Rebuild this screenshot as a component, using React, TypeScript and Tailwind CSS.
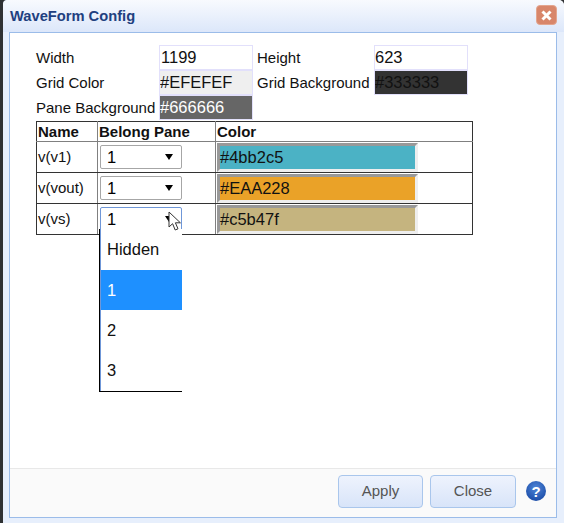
const FONT = "font-['Liberation_Sans',Arial,sans-serif]";

const ROWS = [
  { name: 'v(v1)', color: '#4bb2c5', swatch: 'bg-[#4bb2c5]' },
  { name: 'v(vout)', color: '#EAA228', swatch: 'bg-[#eaa228]' },
  { name: 'v(vs)', color: '#c5b47f', swatch: 'bg-[#c5b47f]' },
];

function Field({ value, className = '' }: { value: string; className?: string }) {
  return (
    <div className={`h-[25px] border border-[#e2e0fb] text-[16.5px] leading-[23px] whitespace-nowrap overflow-hidden ${className}`}>
      {value}
    </div>
  );
}

function Select({ focused }: { focused?: boolean }) {
  return (
    <div
      className={`ml-[2px] w-[82px] h-[24px] rounded-[2px] border bg-white flex items-center justify-between pl-[6px] pr-[8px] text-[16.5px] text-black ${
        focused ? 'border-[#6f97d8]' : 'border-[#a6a6a6]'
      }`}
    >
      <span>1</span>
      <span className="w-0 h-0 border-x-[4px] border-x-transparent border-t-[6px] border-t-black" />
    </div>
  );
}

export default function App() {
  return (
    <div className={`${FONT} w-[564px] h-[523px] overflow-hidden bg-[#2f3133] pl-[3px] text-[15px] text-[#111]`}>
      <div className="w-[561px] h-[523px] rounded-tr-[6px] rounded-tl-[4px] bg-[#e7effc] flex flex-col">
        {/* Title bar */}
        <div className="h-[32px] shrink-0 rounded-t-[5px] bg-gradient-to-b from-[#f8fafe] to-[#dce7fa] flex items-center justify-between pl-[7px] pr-[7px]">
          <span className="text-[14.7px] font-bold text-[#21407f]">WaveForm Config</span>
          <span className="w-[21px] h-[20px] mb-[2px] rounded-[4px] bg-[#d8866a] border border-[#e3a58e] flex items-center justify-center">
            <svg width="13" height="13" viewBox="0 0 13 13">
              <path d="M2.5 2.5l8 8M10.5 2.5l-8 8" stroke="#fff" strokeWidth="3" />
            </svg>
          </span>
        </div>

        {/* Body */}
        <div className="ml-[6px] mr-[7px] h-[486px] shrink-0 border border-[#9bbce9] bg-white flex flex-col">
          <div className="flex-1 pt-[12px] pl-[26px] relative">
            <div className="grid grid-cols-[123px_94px_4px_117px_94px] items-center text-[15px] leading-[25px]">
              <span>Width</span>
              <Field value="1199" className="pl-[1px]" />
              <span />
              <span>Height</span>
              <Field value="623" />

              <span>Grid Color</span>
              <Field value="#EFEFEF" className="bg-[#efefef]" />
              <span />
              <span className="whitespace-nowrap">Grid Background</span>
              <Field value="#333333" className="bg-[#333333]" />

              <span className="whitespace-nowrap">Pane Background</span>
              <Field value="#666666" className="bg-[#666666] text-white" />
            </div>

            <table className="mt-[1px] w-[437px] table-fixed border-collapse border border-[#333] text-[15px]">
              <colgroup>
                <col className="w-[61px]" />
                <col className="w-[118px]" />
                <col />
              </colgroup>
              <thead>
                <tr className="h-[20px]">
                  <th className="border border-[#808080] border-t-[#333] border-l-[#333] px-[1px] text-left leading-[19px]">Name</th>
                  <th className="border border-[#808080] border-t-[#333] px-[1px] text-left leading-[19px]">Belong Pane</th>
                  <th className="border border-[#808080] border-t-[#333] border-r-[#333] px-[1px] text-left leading-[19px]">Color</th>
                </tr>
              </thead>
              <tbody>
                {ROWS.map((row, i) => (
                  <tr key={row.name} className="h-[31px]">
                    <td className="border border-[#808080] border-l-[#333] border-b-[#333] px-[1px] p-0">{row.name}</td>
                    <td className="border border-[#808080] border-b-[#333] p-0">
                      <Select focused={i === 2} />
                    </td>
                    <td className="border border-[#808080] border-r-[#333] border-b-[#333] p-0">
                      <div
                        className={`ml-[1px] w-[201px] h-[29px] border-[3px] border-t-[#999] border-l-[#999] border-r-[#eee] border-b-[#eee] text-[16.5px] leading-[22px] ${row.swatch}`}
                      >
                        {row.color}
                      </div>
                    </td>
                  </tr>
                ))}
              </tbody>
            </table>

            {/* Open select list */}
            <div className="absolute left-[89px] top-[196px] w-[83px] h-[163px] bg-white border-l-[1px] border-b-[1px] border-black text-[16.5px]">
              <div className="border-l border-[#6f97d8] h-full">
                <div className="h-[41px] pl-[6px] leading-[41px]">Hidden</div>
                <div className="h-[40px] pl-[6px] leading-[40px] bg-[#1e90ff] text-white">1</div>
                <div className="h-[40px] pl-[6px] leading-[40px]">2</div>
                <div className="h-[40px] pl-[6px] leading-[40px]">3</div>
              </div>
            </div>

            {/* Mouse cursor */}
            <svg className="absolute left-[158px] top-[178px]" width="14" height="21" viewBox="0 0 14 21">
              <path
                d="M1 1v15l3.6-3.3 2.6 6.3 2.8-1.2-2.6-6h5z"
                fill="#fff"
                stroke="#333"
                strokeWidth="1"
                strokeLinejoin="round"
              />
            </svg>
          </div>

          {/* Footer */}
          <div className="h-[49px] shrink-0 border-t border-[#e8e8e8] bg-[#fafafa] flex items-start pt-[6px] pl-[328px]">
            <button className="w-[85px] h-[33px] rounded-[4px] border border-[#a9c6ec] bg-gradient-to-b from-[#eef3fd] to-[#d8e4f9] text-[15px] text-[#555]">
              Apply
            </button>
            <button className="ml-[7px] w-[86px] h-[33px] rounded-[4px] border border-[#a9c6ec] bg-gradient-to-b from-[#eef3fd] to-[#d8e4f9] text-[15px] text-[#555]">
              Close
            </button>
            <span className="ml-[10px] mt-[6px] w-[20px] h-[20px] rounded-full bg-[radial-gradient(circle_at_50%_35%,#4f86d8,#0f3f9c)] flex items-center justify-center text-[15px] leading-none font-bold text-white">
              ?
            </span>
          </div>
        </div>
      </div>
    </div>
  );
}
